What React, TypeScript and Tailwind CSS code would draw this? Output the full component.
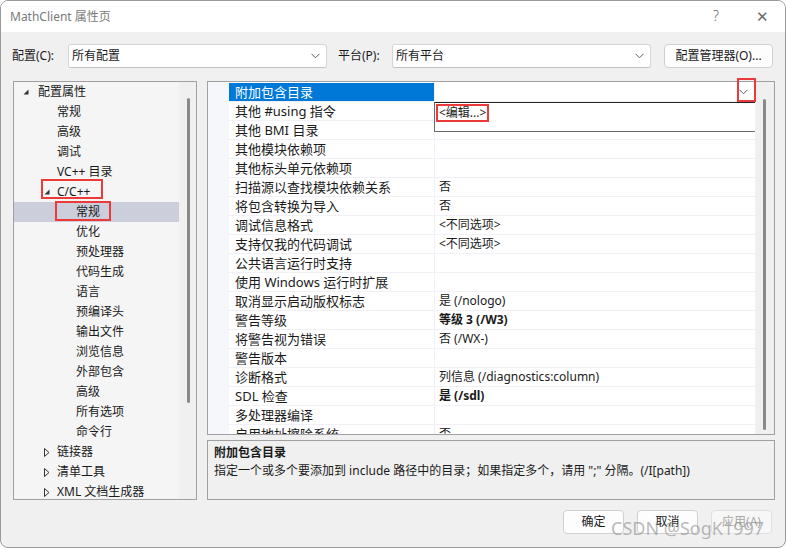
import React from 'react';

const font = { fontFamily: '"Noto Sans", "Noto Sans CJK SC", sans-serif' };

interface TreeItem {
  label: string;
  level: number;
  expand?: 'open' | 'closed';
  selected?: boolean;
  box?: boolean;
}

const treeItems: TreeItem[] = [
  { label: '配置属性', level: 0, expand: 'open' },
  { label: '常规', level: 1 },
  { label: '高级', level: 1 },
  { label: '调试', level: 1 },
  { label: 'VC++ 目录', level: 1 },
  { label: 'C/C++', level: 1, expand: 'open', box: true },
  { label: '常规', level: 2, selected: true, box: true },
  { label: '优化', level: 2 },
  { label: '预处理器', level: 2 },
  { label: '代码生成', level: 2 },
  { label: '语言', level: 2 },
  { label: '预编译头', level: 2 },
  { label: '输出文件', level: 2 },
  { label: '浏览信息', level: 2 },
  { label: '外部包含', level: 2 },
  { label: '高级', level: 2 },
  { label: '所有选项', level: 2 },
  { label: '命令行', level: 2 },
  { label: '链接器', level: 1, expand: 'closed' },
  { label: '清单工具', level: 1, expand: 'closed' },
  { label: 'XML 文档生成器', level: 1, expand: 'closed' },
];

interface PropRow {
  name: string;
  value?: string;
  bold?: boolean;
}

const propRows: PropRow[] = [
  { name: '附加包含目录' },
  { name: '其他 #using 指令' },
  { name: '其他 BMI 目录' },
  { name: '其他模块依赖项' },
  { name: '其他标头单元依赖项' },
  { name: '扫描源以查找模块依赖关系', value: '否' },
  { name: '将包含转换为导入', value: '否' },
  { name: '调试信息格式', value: '<不同选项>' },
  { name: '支持仅我的代码调试', value: '<不同选项>' },
  { name: '公共语言运行时支持' },
  { name: '使用 Windows 运行时扩展' },
  { name: '取消显示启动版权标志', value: '是 (/nologo)' },
  { name: '警告等级', value: '等级 3 (/W3)', bold: true },
  { name: '将警告视为错误', value: '否 (/WX-)' },
  { name: '警告版本' },
  { name: '诊断格式', value: '列信息 (/diagnostics:column)' },
  { name: 'SDL 检查', value: '是 (/sdl)', bold: true },
  { name: '多处理器编译' },
  { name: '启用地址擦除系统', value: '否' },
];

function Chevron() {
  return (
    <svg width="9" height="6" viewBox="0 0 9 6" className="shrink-0">
      <path d="M0.5 0.8 L4.5 4.8 L8.5 0.8" fill="none" stroke="#606060" strokeWidth="1" />
    </svg>
  );
}

function Combo({ value }: { value: string }) {
  return (
    <div className="flex h-[24px] w-[259px] items-center justify-between rounded-[3px] border border-[#d6d6d6] border-b-[#c2c2c2] bg-white pl-[3px] pr-[6px] text-[12px] text-[#1a1a1a]">
      <span>{value}</span>
      <Chevron />
    </div>
  );
}

function TreeArrow({ kind }: { kind: 'open' | 'closed' }) {
  if (kind === 'open') {
    return (
      <svg width="6" height="6" viewBox="0 0 6 6">
        <polygon points="5.5,0.5 5.5,5.5 0.5,5.5" fill="#333" />
      </svg>
    );
  }
  return (
    <svg width="6" height="9" viewBox="0 0 6 9">
      <polygon points="0.5,0.5 5,4.5 0.5,8.5" fill="none" stroke="#333" strokeWidth="1" />
    </svg>
  );
}

function Tree() {
  return (
    <div className="flex h-[419px] w-[184px] border border-[#a0a0a0] bg-[#f5f5f5]">
      <div className="w-[165px] text-[12px] text-[#1a1a1a]">
        {treeItems.map((item, i) => {
          const textLeft = item.level === 0 ? 24 : item.level === 1 ? 43 : 62;
          return (
            <div
              key={i}
              className={`relative flex h-[20px] items-center ${item.selected ? 'bg-[#cccedb]' : ''}`}
            >
              {item.expand && (
                <span
                  className={`absolute flex items-center ${item.level === 0 ? 'left-[9px]' : 'left-[30px]'}`}
                >
                  <TreeArrow kind={item.expand} />
                </span>
              )}
              <span style={{ marginLeft: textLeft }} className="leading-none">
                {item.label}
              </span>
              {item.box && item.level === 1 && (
                <span className="absolute left-[27px] top-[-3px] h-[20px] w-[62px] border-2 border-[#ec3a3a]" />
              )}
              {item.box && item.level === 2 && (
                <span className="absolute left-[41px] top-[-1px] h-[20px] w-[56px] border-2 border-[#ec3a3a]" />
              )}
            </div>
          );
        })}
      </div>
      <div className="w-[17px] bg-[#f0f0f0] pl-[8px] pt-[16px]">
        <div className="h-[305px] w-[3px] rounded-full bg-[#8a8a8a]" />
      </div>
    </div>
  );
}

function PropertyGrid() {
  return (
    <div className="relative h-[354px] w-[568px] border border-[#a0a0a0] bg-white">
      <div className="flex h-full">
        <div className="w-[21px] bg-[#f5f7fb]" />
        <div className="relative w-[526px] overflow-hidden pt-[1px]">
          {propRows.map((row, i) => (
            <div key={i} className="flex h-[19px] border-b border-[#f0f0f6]">
              <div
                className={`flex w-[205px] items-center whitespace-nowrap pl-[6px] text-[13px] leading-none ${
                  i === 0 ? 'bg-[#0078d7] text-white' : 'text-[#1a1a1a]'
                }`}
              >
                {row.name}
              </div>
              <div
                className={`flex flex-1 items-center justify-between border-l border-[#f0f0f6] pl-[4px] pr-[7px] text-[12px] leading-none text-[#1a1a1a] ${
                  row.bold ? 'font-bold' : ''
                }`}
              >
                <span>{row.value ?? ''}</span>
                {i === 0 && <Chevron />}
              </div>
            </div>
          ))}
          {/* open dropdown of the first row */}
          <div className="absolute left-[205px] top-[20px] flex h-[30px] w-[322px] items-start border border-[#6a6a6a] border-t-dotted border-t-[#222] bg-white pl-[1px] pt-[1px] leading-none">
            <span className="flex h-[18px] items-center border-2 border-[#ec3a3a] px-[1px] text-[12px] leading-none text-[#1a1a1a]">
              {'<编辑...>'}
            </span>
          </div>
        </div>
        <div className="w-[19px] bg-[#f0f0f0] pl-[8px] pt-[17px]">
          <div className="h-[331px] w-[3px] rounded-full bg-[#8a8a8a]" />
        </div>
      </div>
      <span className="absolute left-[529px] top-[-4px] h-[24px] w-[19px] border-2 border-[#ec3a3a]" />
    </div>
  );
}

function Description() {
  return (
    <div className="h-[60px] w-[568px] border border-[#a0a0a0] bg-[#f0f0f0] px-[6px] pt-[4px] text-[12px] text-[#1a1a1a]">
      <div className="h-[18px] font-bold leading-[16px]">附加包含目录</div>
      <div className="leading-[16px]">
        指定一个或多个要添加到 include 路径中的目录；如果指定多个，请用 ";" 分隔。(/I[path])
      </div>
    </div>
  );
}

function DialogButton({ label, disabled }: { label: string; disabled?: boolean }) {
  return (
    <div
      className={`flex h-[24px] w-[61px] items-center justify-center rounded-[4px] border text-[12px] ${
        disabled
          ? 'border-[#e0e0e0] bg-[#f7f7f7] text-[#a8a8a8]'
          : 'border-[#d0d0d0] bg-[#fdfdfd] text-[#1a1a1a]'
      }`}
    >
      {label}
    </div>
  );
}

export default function App() {
  return (
    <div
      style={font}
      className="relative flex h-[548px] w-[786px] flex-col overflow-hidden rounded-[8px] border border-[#9a9a9a] bg-[#f0f0f0]"
    >
      {/* Title bar */}
      <div className="flex h-[31px] shrink-0 items-center justify-between bg-white pl-[9px]">
        <span className="text-[12px] text-[#7a7a7a]">MathClient 属性页</span>
        <div className="flex text-[#6a6a6a]">
          <span className="flex w-[46px] justify-center text-[14px] font-light">?</span>
          <span className="flex w-[46px] justify-center text-[15px] font-light">✕</span>
        </div>
      </div>

      <div className="flex flex-1 flex-col px-[11px]">
        {/* Configuration row */}
        <div className="mt-[11px] flex h-[25px] items-center text-[12px] text-[#1a1a1a]">
          <span className="w-[56px]">配置(C):</span>
          <Combo value="所有配置" />
          <span className="ml-[11px] w-[54px]">平台(P):</span>
          <Combo value="所有平台" />
          <div className="ml-[13px] flex h-[24px] w-[109px] items-center justify-center rounded-[4px] border border-[#d0d0d0] bg-[#fdfdfd]">
            配置管理器(O)...
          </div>
        </div>

        {/* Main area */}
        <div className="mt-[13px] flex">
          <div className="ml-[1px]">
            <Tree />
          </div>
          <div className="ml-[10px] flex flex-col gap-[5px]">
            <PropertyGrid />
            <Description />
          </div>
        </div>

        {/* Footer buttons */}
        <div className="mt-[10px] flex justify-end gap-[13px] pr-[2px]">
          <DialogButton label="确定" />
          <DialogButton label="取消" />
          <DialogButton label="应用(A)" disabled />
        </div>
      </div>

      {/* watermark */}
      <span className="pointer-events-none absolute left-[610px] top-[514px] whitespace-nowrap text-[18px] leading-[26px] text-[#8c8c8c]/60">
        CSDN @SogK1997
      </span>
    </div>
  );
}
